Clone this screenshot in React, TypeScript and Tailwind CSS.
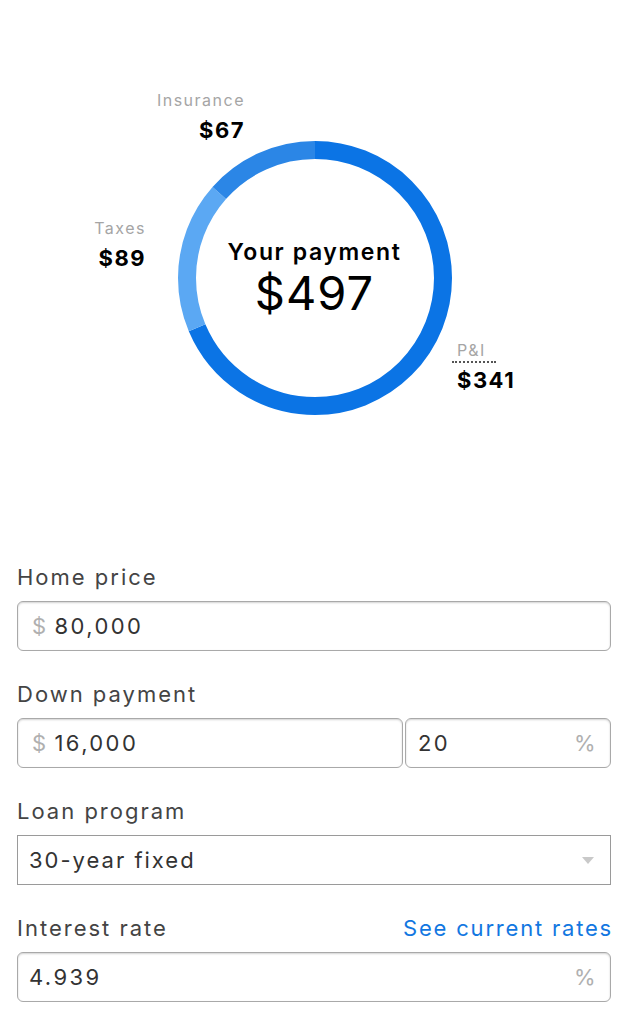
import React from "react";

const font = { fontFamily: "Inter, 'Open Sans', sans-serif" };

const total = 497;
const R = 128;
const C = 2 * Math.PI * R;

const segments = [
  { label: "P&I", value: 341, color: "#0b74e5" },
  { label: "Taxes", value: 89, color: "#5ba8f3" },
  { label: "Insurance", value: 67, color: "#2b86e6" },
];

function Donut() {
  let offset = 0;
  return (
    <svg width="274" height="274" viewBox="0 0 274 274" className="block">
      <g transform="rotate(-90 137 137)">
        {segments.map((s) => {
          const len = (s.value / total) * C;
          const el = (
            <circle
              key={s.label}
              cx="137"
              cy="137"
              r={R}
              fill="none"
              stroke={s.color}
              strokeWidth="18"
              strokeDasharray={`${len} ${C - len}`}
              strokeDashoffset={-offset}
            />
          );
          offset += len;
          return el;
        })}
      </g>
    </svg>
  );
}

function Field({ children, className = "" }: { children: React.ReactNode; className?: string }) {
  return (
    <div
      className={`flex items-center h-[50px] px-[14px] bg-white border border-[#a9a9a9] rounded-[6px] shadow-[inset_0_1px_2px_rgba(0,0,0,0.18)] text-[22px] tracking-[2.4px] text-[#333] ${className}`}
    >
      {children}
    </div>
  );
}

function Label({ children }: { children: React.ReactNode }) {
  return <div className="text-[22px] leading-[28px] tracking-[2px] text-[#444] mb-[10px]">{children}</div>;
}

export default function App() {
  return (
    <main className="w-[628px] h-[1024px] bg-white overflow-hidden antialiased" style={font}>
      <section className="relative h-[563px]">
        <div className="flex justify-center pt-[141px] pl-[1px]">
          <div className="relative">
            <Donut />
            <div className="absolute inset-0 flex flex-col items-center justify-center pt-[2px]">
              <div className="text-[23px] font-semibold tracking-[1.6px] text-black leading-[28px]">Your payment</div>
              <div className="text-[47px] tracking-[1px] text-black leading-[54px]">$497</div>
            </div>
          </div>
        </div>

        <div className="absolute left-[130px] top-[89px] w-[115px] text-right">
          <div className="text-[16px] leading-[22px] tracking-[1.5px] text-[#a5a5a5]">Insurance</div>
          <div className="text-[22px] leading-[28px] tracking-[1.5px] font-bold text-black mt-[5px]">$67</div>
        </div>

        <div className="absolute left-[50px] top-[217px] w-[96px] text-right">
          <div className="text-[16px] leading-[22px] tracking-[1.5px] text-[#a5a5a5]">Taxes</div>
          <div className="text-[22px] leading-[28px] tracking-[1.5px] font-bold text-black mt-[5px]">$89</div>
        </div>

        <div className="absolute left-[452px] top-[339px]">
          <div className="text-[16px] leading-[22px] tracking-[1.5px] text-[#a5a5a5] pl-[5px]">P&amp;I</div>
          <div className="w-[44px] border-t-2 border-dotted border-[#555]" />
          <div className="text-[22px] leading-[28px] tracking-[1.5px] font-bold text-black pl-[5px] mt-[3px]">$341</div>
        </div>
      </section>

      <form className="px-[17px] flex flex-col gap-[29px]">
        <div>
          <Label>Home price</Label>
          <Field>
            <span className="text-[#b0b0b0] mr-[6px]">$</span>
            <span>80,000</span>
          </Field>
        </div>

        <div>
          <Label>Down payment</Label>
          <div className="flex gap-[2px]">
            <Field className="flex-1">
              <span className="text-[#b0b0b0] mr-[6px]">$</span>
              <span>16,000</span>
            </Field>
            <Field className="w-[206px] justify-between">
              <span className="-ml-[2px]">20</span>
              <span className="text-[#b0b0b0] -mr-[2px]">%</span>
            </Field>
          </div>
        </div>

        <div>
          <Label>Loan program</Label>
          <div className="flex items-center justify-between h-[50px] px-[11px] border border-[#9a9a9a] text-[22px] tracking-[2px] text-[#333]">
            <span>30-year fixed</span>
            <svg width="12" height="7" viewBox="0 0 12 7" className="mr-[5px]">
              <path d="M0 0 L12 0 L6 7 Z" fill="#c9c9c9" />
            </svg>
          </div>
        </div>

        <div>
          <div className="flex justify-between items-baseline">
            <Label>Interest rate</Label>
            <a className="text-[22px] leading-[28px] tracking-[1.8px] text-[#1277e1] -mr-[2px]">See current rates</a>
          </div>
          <Field className="justify-between">
            <span className="-ml-[3px]">4.939</span>
            <span className="text-[#b0b0b0] -mr-[2px]">%</span>
          </Field>
        </div>
      </form>
    </main>
  );
}
